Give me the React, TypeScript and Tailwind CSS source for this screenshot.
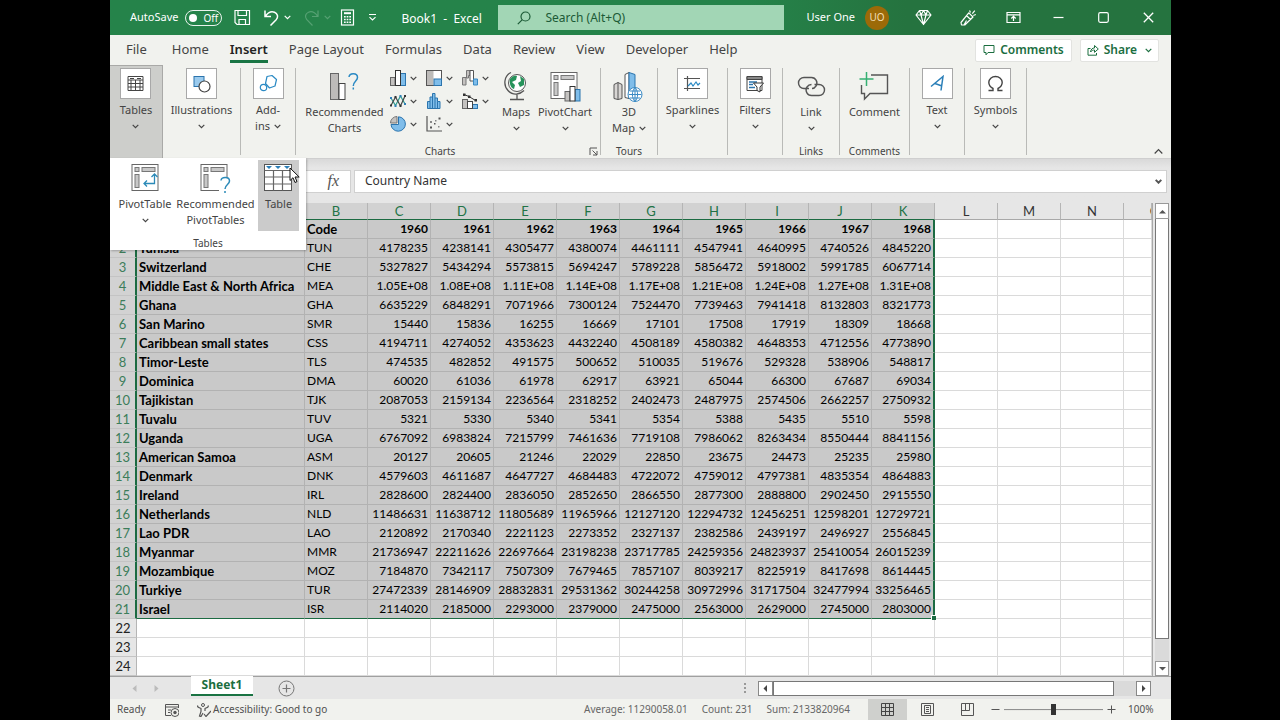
import type { ReactNode } from "react";
import { clsx } from "clsx";

const columns = ["A", "B", "C", "D", "E", "F", "G", "H", "I", "J", "K", "L", "M", "N", "O"];

const selectedCols = 11;
const selectedRows = 21;

const rows: string[][] = [
  ["Country Name", "Code", "1960", "1961", "1962", "1963", "1964", "1965", "1966", "1967", "1968"],
  ["Tunisia", "TUN", "4178235", "4238141", "4305477", "4380074", "4461111", "4547941", "4640995", "4740526", "4845220"],
  ["Switzerland", "CHE", "5327827", "5434294", "5573815", "5694247", "5789228", "5856472", "5918002", "5991785", "6067714"],
  ["Middle East & North Africa", "MEA", "1.05E+08", "1.08E+08", "1.11E+08", "1.14E+08", "1.17E+08", "1.21E+08", "1.24E+08", "1.27E+08", "1.31E+08"],
  ["Ghana", "GHA", "6635229", "6848291", "7071966", "7300124", "7524470", "7739463", "7941418", "8132803", "8321773"],
  ["San Marino", "SMR", "15440", "15836", "16255", "16669", "17101", "17508", "17919", "18309", "18668"],
  ["Caribbean small states", "CSS", "4194711", "4274052", "4353623", "4432240", "4508189", "4580382", "4648353", "4712556", "4773890"],
  ["Timor-Leste", "TLS", "474535", "482852", "491575", "500652", "510035", "519676", "529328", "538906", "548817"],
  ["Dominica", "DMA", "60020", "61036", "61978", "62917", "63921", "65044", "66300", "67687", "69034"],
  ["Tajikistan", "TJK", "2087053", "2159134", "2236564", "2318252", "2402473", "2487975", "2574506", "2662257", "2750932"],
  ["Tuvalu", "TUV", "5321", "5330", "5340", "5341", "5354", "5388", "5435", "5510", "5598"],
  ["Uganda", "UGA", "6767092", "6983824", "7215799", "7461636", "7719108", "7986062", "8263434", "8550444", "8841156"],
  ["American Samoa", "ASM", "20127", "20605", "21246", "22029", "22850", "23675", "24473", "25235", "25980"],
  ["Denmark", "DNK", "4579603", "4611687", "4647727", "4684483", "4722072", "4759012", "4797381", "4835354", "4864883"],
  ["Ireland", "IRL", "2828600", "2824400", "2836050", "2852650", "2866550", "2877300", "2888800", "2902450", "2915550"],
  ["Netherlands", "NLD", "11486631", "11638712", "11805689", "11965966", "12127120", "12294732", "12456251", "12598201", "12729721"],
  ["Lao PDR", "LAO", "2120892", "2170340", "2221123", "2273352", "2327137", "2382586", "2439197", "2496927", "2556845"],
  ["Myanmar", "MMR", "21736947", "22211626", "22697664", "23198238", "23717785", "24259356", "24823937", "25410054", "26015239"],
  ["Mozambique", "MOZ", "7184870", "7342117", "7507309", "7679465", "7857107", "8039217", "8225919", "8417698", "8614445"],
  ["Turkiye", "TUR", "27472339", "28146909", "28832831", "29531362", "30244258", "30972996", "31717504", "32477994", "33256465"],
  ["Israel", "ISR", "2114020", "2185000", "2293000", "2379000", "2475000", "2563000", "2629000", "2745000", "2803000"],
  [],
  [],
  [],
];

const menuTabs = ["File", "Home", "Insert", "Page Layout", "Formulas", "Data", "Review", "View", "Developer", "Help"];

function Chevron({ className }: { className?: string }) {
  return (
    <svg className={clsx("h-[5px] w-[7px] shrink-0", className)} viewBox="0 0 7 5" fill="none" stroke="currentColor" strokeWidth="1.2">
      <path d="M0.7 0.9 3.5 3.7 6.3 0.9" />
    </svg>
  );
}

function Icon({ size, children, className }: { size: number; children: ReactNode; className?: string }) {
  return (
    <svg width={size} height={size} viewBox={`0 0 ${size} ${size}`} fill="none" className={clsx("shrink-0", className)} aria-hidden>
      {children}
    </svg>
  );
}

/* ---------- Title bar ---------- */

function TitleButton({ label, children }: { label: string; children: ReactNode }) {
  return (
    <button type="button" aria-label={label} className="flex h-full w-[45px] items-center justify-center">
      {children}
    </button>
  );
}

function TitleBar() {
  return (
    <header className="flex h-[35px] shrink-0 items-center bg-linear-to-r from-[#25834a] from-60% to-[#25733f] to-75% text-[11px] text-white">
      <label className="ml-5 flex items-center gap-[7px]">
        AutoSave
        <input type="checkbox" className="peer sr-only" />
        <span className="flex h-4 w-[37px] items-center gap-[6px] rounded-full border border-white/90 px-[3px] text-[10px] leading-none">
          <span className="size-2 rounded-full bg-white" />
          Off
        </span>
      </label>
      <button type="button" aria-label="Save" className="ml-3">
        <Icon size={17}>
          <path d="M1 1.5h14.5v14H3l-2-2z M4 1.500v5h8.500v-5 M5 15.500v-5h6.500v5" stroke="#fff" strokeWidth="1.2" />
        </Icon>
      </button>
      <button type="button" aria-label="Undo" className="ml-3 flex items-center gap-1">
        <Icon size={17}>
          <path d="M2 1.5v6h6 M2.4 7.2C5 3.5 8.4 2 11.5 3.2c3 1.200 4 4.600 1.900 7.200L7.500 16.500" stroke="#fff" strokeWidth="1.5" />
        </Icon>
        <Chevron />
      </button>
      <button type="button" aria-label="Redo" className="ml-3 flex items-center gap-1 text-[#56a173]">
        <Icon size={17}>
          <path d="M15 1.5v6H9 M14.6 7.2C12 3.5 8.600 2 5.500 3.200c-3 1.200-4 4.600-1.900 7.200L9.500 16.500" stroke="currentColor" strokeWidth="1.2" />
        </Icon>
        <Chevron />
      </button>
      <button type="button" aria-label="Calculator" className="ml-2">
        <Icon size={17}>
          <rect x="2.5" y="1" width="12" height="15" stroke="#fff" strokeWidth="1.2" />
          <path d="M5 4.2h7" stroke="#fff" strokeWidth="2" />
          <path d="M5 7.8h7M5 10.5h7M5 13.2h7" stroke="#fff" strokeWidth="1.5" strokeDasharray="1.7 0.95" />
        </Icon>
      </button>
      <button type="button" aria-label="Customize Quick Access Toolbar" className="ml-3">
        <Icon size={9}>
          <path d="M1 1.5h7 M1.5 4.2 4.5 7l3-2.8" stroke="#fff" strokeWidth="1.1" />
        </Icon>
      </button>
      <h1 className="ml-6 w-[97px] shrink-0 pt-[2px] text-[12px] whitespace-pre">Book1  -  Excel</h1>
      <label className="flex h-[25px] max-w-[430px] min-w-0 flex-1 items-center bg-[#a2d6b5] px-[19px] text-[#1c5a36]">
        <Icon size={14}>
          <circle cx="8.5" cy="5.5" r="4.5" stroke="currentColor" strokeWidth="1.2" />
          <path d="M5.3 8.7 0.8 13.2" stroke="currentColor" strokeWidth="1.2" />
        </Icon>
        <input
          type="search"
          aria-label="Search"
          placeholder="Search (Alt+Q)"
          className="ml-[14px] w-full min-w-0 bg-transparent text-[12px] outline-none placeholder:text-[#1c5a36]"
        />
      </label>
      <button type="button" className="ml-[22px] flex shrink-0 items-center gap-[10px]">
        User One
        <span className="flex size-6 items-center justify-center rounded-full bg-[#9c6a08] text-[10px] text-[#f3dfb4]">UO</span>
      </button>
      <div className="ml-3 flex h-full shrink-0">
        <TitleButton label="Premium">
          <Icon size={17}>
            <path d="M4.5 1.5h8L16 6l-7.5 9.500L1 6z M1 6h15 M4.5 1.5 6 6l2.500 9.500L11 6l1.500-4.500 M8.500 1.500 6 6 M8.500 1.500 11 6" stroke="#fff" strokeWidth="1.2" strokeLinejoin="round" />
          </Icon>
        </TitleButton>
        <TitleButton label="Coming soon">
          <Icon size={17}>
            <path d="M8.8 3.8 13 8 4.800 16H1.500L1 13.500z M6.500 6.500l4 4 M4 16l2.500-4.500 M10.500 3.500 9.500 1.500 M12.300 4.700l2.500-3 M13.300 6.500l2.500-1" stroke="#fff" strokeWidth="1.2" strokeLinejoin="round" />
          </Icon>
        </TitleButton>
        <TitleButton label="Ribbon display options">
          <Icon size={15}>
            <path d="M1 2.5h13v10H1z M1 4.800h13 M7.500 11V6.500 M5.300 8.500l2.200-2.200 2.200 2.200" stroke="#fff" strokeWidth="1.2" />
          </Icon>
        </TitleButton>
        <TitleButton label="Minimize">
          <Icon size={11}>
            <path d="M0.5 5.5h10" stroke="#fff" strokeWidth="1.2" />
          </Icon>
        </TitleButton>
        <TitleButton label="Maximize">
          <Icon size={11}>
            <rect x="0.7" y="0.7" width="9.6" height="9.6" rx="1.5" stroke="#fff" strokeWidth="1.2" />
          </Icon>
        </TitleButton>
        <TitleButton label="Close">
          <Icon size={11}>
            <path d="M0.8 0.8l9.400 9.400M10.200 0.800 0.800 10.200" stroke="#fff" strokeWidth="1.3" />
          </Icon>
        </TitleButton>
      </div>
    </header>
  );
}

/* ---------- Menu tabs ---------- */

function MenuTabs() {
  return (
    <div className="flex h-[30px] shrink-0 items-center bg-[#f1f2ee] pr-3 pl-4">
      <nav className="flex h-full gap-[21px] text-[13px] text-[#444]">
        {menuTabs.map((tab) => (
          <button key={tab} type="button" className="relative flex h-full shrink-0 items-center first:mr-1">
            <span className={clsx(tab === "Insert" && "font-semibold text-[#222]")}>{tab}</span>
            {tab === "Insert" && <span className="absolute inset-x-0 bottom-[2px] h-[3px] bg-[#197544]" />}
          </button>
        ))}
      </nav>
      <button
        type="button"
        className="ml-auto flex h-[23px] items-center gap-[5px] rounded-xs border border-[#e2e3e0] bg-white px-[7px] text-[12px] font-semibold text-[#1b6e3f]"
      >
        <Icon size={12}>
          <path d="M1 1.5h10v7H5L3 10.800V8.500H1z" stroke="currentColor" />
        </Icon>
        Comments
      </button>
      <button
        type="button"
        className="ml-2 flex h-[23px] items-center gap-[5px] rounded-xs border border-[#e2e3e0] bg-white px-[6px] text-[12px] font-semibold text-[#1b6e3f]"
      >
        <Icon size={12}>
          <path d="M3.5 4.5H1v6.700h8.500V9 M3.500 8c.5-3 2-4 4-4V1.500L11.300 5 7.500 8.300V6C6 6 4.800 6.500 3.500 8z" stroke="currentColor" />
        </Icon>
        Share
        <Chevron className="ml-[3px]" />
      </button>
    </div>
  );
}

/* ---------- Ribbon ---------- */

function Group({ width, label, labelClass, last, children }: { width: string; label?: string; labelClass?: string; last?: boolean; children: ReactNode }) {
  return (
    <section className={clsx("relative my-[3px] flex shrink-0 flex-col border-r border-[#b9bab7]", width, last && "mr-auto")}>
      <div className="flex flex-1 justify-center">{children}</div>
      {label && <h2 className={clsx("absolute inset-x-0 -bottom-[3px] text-center text-[10px] leading-[14px] text-[#444]", labelClass)}>{label}</h2>}
    </section>
  );
}

/* Collapsed group: a framed icon, its label and a chevron below */
function BoxButton({ label, tail, children }: { label: string; tail?: string; children: ReactNode }) {
  return (
    <button type="button" className="flex flex-col items-center text-[11px] leading-4">
      <span className="flex size-[31px] items-center justify-center border border-[#a8a8a8] bg-white">{children}</span>
      <span className="mt-[3px]">{label}</span>
      <span className="flex h-4 items-center gap-1">
        {tail}
        <Chevron />
      </span>
    </button>
  );
}

function BigButton({ label, tail, arrow, children }: { label: string; tail?: string; arrow?: boolean; children: ReactNode }) {
  return (
    <button type="button" className="flex flex-col items-center text-[11px] leading-4">
      <span className="flex h-[36px] items-center justify-center">{children}</span>
      <span>{label}</span>
      <span className="flex h-4 items-center gap-1">
        {tail}
        {arrow && <Chevron />}
      </span>
    </button>
  );
}

function PivotFrame() {
  return (
    <>
      <rect x="1" y="1.5" width="26" height="26" fill="#fff" stroke="#666" />
      <rect x="4" y="4.5" width="4" height="4" fill="#c8c8c8" stroke="#777" />
      <rect x="11" y="4.5" width="13" height="4" fill="#c8c8c8" stroke="#777" />
      <rect x="4" y="11.5" width="4" height="13" fill="#c8c8c8" stroke="#777" />
    </>
  );
}

function GlobeLines() {
  return <path d="M15.5 23.5h13M17 20h10M17 27h10M22 16.500c-3.500 4-3.500 10 0 14M22 16.500c3.500 4 3.500 10 0 14M22 16.500v14" stroke="#3a8ac4" />;
}

const chartTypes: { name: string; art: ReactNode }[] = [
  {
    name: "Column chart",
    art: (
      <>
        <rect x="0.5" y="7.5" width="4.5" height="8" fill="#c4c2c0" stroke="#666" />
        <rect x="10.5" y="3.5" width="5" height="12" fill="#7fbdea" stroke="#2b74ad" />
        <rect x="5.5" y="0.5" width="5" height="15" fill="#fff" stroke="#333" />
      </>
    ),
  },
  {
    name: "Hierarchy chart",
    art: (
      <>
        <rect x="0.5" y="0.5" width="15" height="15" fill="#fff" stroke="#555" />
        <rect x="1" y="1" width="6.5" height="14" fill="#bdbbb9" />
        <rect x="8" y="9" width="7.5" height="6.5" fill="#7fbdea" stroke="#2b74ad" />
      </>
    ),
  },
  {
    name: "Waterfall chart",
    art: (
      <>
        <path d="M0.5 15V7.5H4V15z M4.5 8V0.5H8V5.500H6.500V8z" fill="#c4c2c0" stroke="#777" />
        <path d="M8 0.5h3.500V11H8z" fill="#fff" stroke="#555" />
        <path d="M11.5 9v6h4V9z" fill="#7fbdea" stroke="#3a8ac4" />
      </>
    ),
  },
  {
    name: "Line chart",
    art: (
      <>
        <path d="M1 5 5.5 12.500 10.500 3l4.500 8" stroke="#2f9a8f" strokeWidth="1.2" />
        <path d="M1 12.500 5.500 4l5 9L15 3" stroke="#444" strokeWidth="1.2" />
        <path d="M0 11.500h2v2H0zM4.500 3h2v2h-2zM9.500 12h2v2h-2zM14 2h2v2h-2z" fill="#333" />
        <path d="M0 4h2v2H0zM4.500 12h2v2h-2zM9.500 2h2v2h-2zM14 10h2v2h-2z" fill="#2f7fb8" />
      </>
    ),
  },
  {
    name: "Statistic chart",
    art: <path d="M1.5 15.5V8.500H4V4h2.500V0.500H9V5h2.500v3.500H14v7z M4 8.500v7M6.500 4v11.500M9 5v10.500M11.500 8.500v7" fill="#7fbdea" stroke="#2b74ad" />,
  },
  {
    name: "Combo chart",
    art: (
      <>
        <rect x="0.5" y="6.5" width="5" height="9" fill="#c4c2c0" stroke="#666" />
        <rect x="10.5" y="11.5" width="5" height="4" fill="#7fbdea" stroke="#2b74ad" />
        <rect x="5.5" y="8.5" width="5" height="7" fill="#fff" stroke="#444" />
        <path d="M2 1.500 7 3.500l6.500 4" stroke="#333" />
        <path d="M1 0.500h2.500V3H1zM6 2.500h2.500V5H6zM12.500 6h2.500v2.500h-2.500z" fill="#333" />
      </>
    ),
  },
  {
    name: "Pie chart",
    art: (
      <>
        <path d="M8.500 0.800A7.200 7.200 0 1 1 1 8.500h7.500z" fill="#7fbdea" stroke="#2b74ad" />
        <path d="M7 0.500A6.500 6.500 0 0 0 0.500 7H7z" fill="#c4c2c0" stroke="#777" />
      </>
    ),
  },
  {
    name: "Scatter chart",
    art: (
      <>
        <path d="M1 0v15h15" stroke="#555" strokeWidth="1.2" />
        <path d="M4 10.500h2v2H4zM8 7h1.500v1.500H8zM12.500 1.500h2v2h-2z" fill="#555" />
        <path d="M4 5h2v2H4zM9 4h1.500v1.500H9zM12 10h1.500v1.500H12z" fill="#888" />
      </>
    ),
  },
];

const chartGrid = [chartTypes.slice(0, 3), chartTypes.slice(3, 6), chartTypes.slice(6)];

function TablesMenu() {
  return (
    <div className="absolute top-full left-0 z-20 flex h-[92px] w-[196px] justify-end bg-white shadow-[1px_1px_2px_rgba(0,0,0,0.25)]">
      <button type="button" className="flex w-[62px] flex-col items-center pt-[5px] text-[11px] leading-4">
        <Icon size={29}>
          <PivotFrame />
          <path d="M23.5 11.5v9H13 M20.500 14l3-3 3 3 M16 17.500l-3 3 3 3" stroke="#2b8ab8" strokeWidth="1.3" />
        </Icon>
        <span className="mt-1">PivotTable</span>
        <span className="flex h-4 items-center">
          <Chevron />
        </span>
      </button>
      <button type="button" className="flex w-[79px] flex-col items-center pt-[5px] text-[11px] leading-4">
        <Icon size={31} className="-mb-[2px]">
          <PivotFrame />
          <path d="M19 14h11v16H19z" fill="#fff" />
          <path d="M21 17.5c.5-4 8.500-4 8.500.5 0 3.500-4.500 3.500-4.500 8M25 28v2" stroke="#2b8ab8" strokeWidth="1.5" />
        </Icon>
        <span className="mt-1 text-center">
          Recommended
          <br />
          PivotTables
        </span>
      </button>
      <button type="button" className="relative mt-[2px] mr-[7px] ml-[3px] flex h-[71px] w-[41px] flex-col items-center bg-[#cbcbcb] pt-[3px] text-[11px] leading-4">
        <Icon size={29}>
          <rect x="0.5" y="1.5" width="27" height="26" fill="#fff" stroke="#555" />
          <path d="M.5 7.500h27M.5 14h27M.5 21h27M9.500 7.500v20M18.500 7.500v20" stroke="#666" strokeWidth="1.2" />
          <path d="M2 3h6L5 6zM11 3h6l-3 3zM20 3h6l-3 3z" fill="#2b7fb8" />
        </Icon>
        <span className="mt-1">Table</span>
        {/* Mouse pointer */}
        <svg className="absolute top-[7px] left-[31px] h-[17px] w-[11px]" viewBox="0 0 11 17">
          <path d="M1 1v12.500l3-2.800 2 4.800 2-.9-2-4.600h4.200z" fill="#fff" stroke="#111" />
        </svg>
      </button>
      <h2 className="absolute inset-x-0 bottom-0 text-center text-[10px] leading-[14px]">Tables</h2>
    </div>
  );
}

function Ribbon() {
  return (
    <div className="relative flex h-[93px] shrink-0 bg-[#f1f2ee] text-[#444]">
      <section className="relative flex w-[53px] shrink-0 justify-center border-t border-r border-[#a9a9a7] bg-[#cdcecb] pt-[2px]">
        <BoxButton label="Tables">
          <Icon size={17}>
            <path d="M1 1.500h15v14H1z M1 5h15 M1 8.500h15M1 12h15 M8.500 5v10.500M4 5v10.500M13 5v10.500" stroke="#444" />
            <path d="M3 3.500h4M10 3.500h4" stroke="#444" />
          </Icon>
        </BoxButton>
      </section>
      <TablesMenu />
      <Group width="w-[78px]">
        <BoxButton label="Illustrations">
          <Icon size={18}>
            <rect x="1" y="1.5" width="10" height="10" fill="#9bcbee" stroke="#2b74ad" />
            <circle cx="11.5" cy="11.5" r="5.5" fill="#fff" stroke="#444" strokeWidth="1.2" />
          </Icon>
        </BoxButton>
      </Group>
      <Group width="w-[55px]">
        <BoxButton label="Add-" tail="ins">
          <Icon size={19}>
            <path d="M8 2.500 13 1.500 17.500 5.500 16 12 10.500 14 6.500 9.500z" stroke="#2b8ac4" strokeWidth="1.2" strokeLinejoin="round" />
            <circle cx="4.5" cy="13.5" r="3.2" fill="#fff" stroke="#2b8ac4" strokeWidth="1.2" />
          </Icon>
        </BoxButton>
      </Group>
      <Group width="w-[305px]" label="Charts" labelClass="pr-4">
        <div className="flex w-full">
          <div className="flex w-[94px] justify-center pl-[3px]">
            <BigButton label="Recommended" tail="Charts">
              <Icon size={30}>
                <rect x="1.5" y="2.5" width="8" height="26" fill="#bdbbb9" stroke="#666" />
                <rect x="10" y="12.5" width="6" height="16" fill="#fff" stroke="#444" />
                <path d="M20 6c.5-4.500 8.500-4.500 8.500.5 0 3.500-4.200 3.500-4.200 8.500M24.300 16.500v2" stroke="#2b8ac4" strokeWidth="1.5" />
              </Icon>
            </BigButton>
          </div>
          <div className="flex w-[106px] flex-col gap-[7px] pt-[2px]">
            {chartGrid.map((line, i) => (
              <div key={i} className="flex">
                {line.map((type) => (
                  <button key={type.name} type="button" aria-label={type.name} className="flex w-9 shrink-0 items-center gap-1">
                    <Icon size={16}>{type.art}</Icon>
                    <Chevron />
                  </button>
                ))}
              </div>
            ))}
          </div>
          <div className="flex w-[40px] justify-center">
            <BigButton label="Maps" arrow>
              <Icon size={30}>
                <circle cx="16" cy="12" r="8.5" fill="#fff" stroke="#555" />
                <path d="M9 8c2-3 5-4 7-3l-1 4-4 2 3 3-1 4c-3-1-5-5-4-10z M19 5l4 3v6l-4 2-2-4 3-2z" fill="#26935a" />
                <path d="M10 1.500C3 5 2 14 7 19.500s12 4 16 0 M16 23v5 M9 28.500h14" stroke="#555" strokeWidth="1.3" />
              </Icon>
            </BigButton>
          </div>
          <div className="flex w-[58px] justify-center">
            <BigButton label="PivotChart" arrow>
              <Icon size={31}>
                <PivotFrame />
                <rect x="15" y="20.5" width="5" height="9.5" fill="#c4c2c0" stroke="#666" />
                <rect x="25" y="18.5" width="5" height="11.5" fill="#7fbdea" stroke="#2b74ad" />
                <rect x="20" y="15.5" width="5" height="14.5" fill="#fff" stroke="#333" />
              </Icon>
            </BigButton>
          </div>
          <button type="button" aria-label="Chart settings" className="absolute right-[2px] -bottom-px">
            <Icon size={9}>
              <path d="M1 8V1h7M3.500 3.500 8 8M8 4v4H4" stroke="#555" />
            </Icon>
          </button>
        </div>
      </Group>
      <Group width="w-[57px]" label="Tours">
        <BigButton label="3D" tail="Map" arrow>
          <Icon size={31}>
            <path d="M1 13.500l4-2 4 2v14l-4 1-4-1z M5 11.500v17" fill="#d8d6d4" stroke="#555" />
            <path d="M12 3.500l4-2v26l-4-1z" fill="#fff" stroke="#555" />
            <path d="M16 1.500l6 2v24h-6z" fill="#7fbdea" stroke="#2b74ad" />
            <circle cx="22" cy="23.5" r="7" fill="#fff" stroke="#3a8ac4" />
            <GlobeLines />
          </Icon>
        </BigButton>
      </Group>
      <Group width="w-[70px]">
        <BoxButton label="Sparklines">
          <Icon size={17}>
            <path d="M3.500 1v15M0 3.500h16M0 13.500h16" stroke="#555" strokeWidth="1.2" />
            <path d="M4 11l3-3 2 3 3-4 2 3 2-2" stroke="#2b8ac4" strokeWidth="1.2" />
          </Icon>
        </BoxButton>
      </Group>
      <Group width="w-[55px]">
        <BoxButton label="Filters">
          <Icon size={18}>
            <path d="M1 1.500h15v14H1z" fill="#fff" stroke="#444" />
            <path d="M1 1.500h15v3H1z" fill="#888" stroke="#444" />
            <path d="M3 7h8M3 9.500h4M3 12.500h6" stroke="#2b74ad" strokeWidth="1.5" />
            <path d="M7.500 8h10L14 12v5l-3-1.500V12z" fill="#fff" stroke="#333" />
          </Icon>
        </BoxButton>
      </Group>
      <Group width="w-[57px]" label="Links">
        <BigButton label="Link" arrow>
          <Icon size={29}>
            <path d="M12 16.500H7a5.500 5.500 0 0 1 0-11h7.500a5.500 5.500 0 0 1 4.500 8.500c-1 1.600-2.500 2.500-4 2.500" stroke="#555" strokeWidth="1.4" />
            <path d="M17.500 12.500H22a5.500 5.500 0 0 1 0 11h-7.500a5.500 5.500 0 0 1-4.500-8.500c1-1.600 2.500-2.500 4.500-2.500" stroke="#555" strokeWidth="1.4" />
          </Icon>
        </BigButton>
      </Group>
      <Group width="w-[70px]" label="Comments">
        <BigButton label="Comment">
          <Icon size={31}>
            <path d="M12 4H28.500V22.500H11L5.500 28V22.500H2.500V14" stroke="#555" strokeWidth="1.4" />
            <path d="M7.500 1v14M.5 8h14" stroke="#34b072" strokeWidth="1.5" />
          </Icon>
        </BigButton>
      </Group>
      <Group width="w-[55px]">
        <BoxButton label="Text">
          <Icon size={17}>
            <path d="M2 11.500 14 1.500 12 15.500M6 8.500l7 2.500" stroke="#2b7fb8" strokeWidth="1.5" />
          </Icon>
        </BoxButton>
      </Group>
      <Group width="w-[62px]" last>
        <BoxButton label="Symbols">
          <Icon size={17}>
            <path d="M1.500 15.500h4.500v-2C3 12 1.800 9.500 1.800 7.300 1.800 4 4.800 1.500 8.500 1.500s6.700 2.500 6.700 5.800c0 2.200-1.200 4.700-4.200 6.200v2h4.500" stroke="#444" strokeWidth="1.4" />
          </Icon>
        </BoxButton>
      </Group>
      <button type="button" aria-label="Collapse ribbon" className="absolute right-2 bottom-[2px]">
        <Icon size={9}>
          <path d="M.7 6.500 4.500 2.700 8.300 6.500" stroke="#444" strokeWidth="1.2" />
        </Icon>
      </button>
    </div>
  );
}

/* ---------- Formula bar ---------- */

function FormulaBar() {
  return (
    <div className="flex h-[45px] shrink-0 items-center gap-[3px] border-t border-[#cfcfcf] bg-linear-to-b from-[#d9d9d9] to-[#e6e6e6] to-20% pr-1 pl-[3px]">
      <input type="text" aria-label="Name box" className="h-[23px] w-[100px] border border-[#d0d0d0] bg-white" />
      <div className="flex h-[23px] w-[135px] items-center justify-end border border-[#d0d0d0] bg-white pr-[11px]">
        <button type="button" aria-label="Insert function" className="font-['Liberation_Serif',serif] text-[16px] leading-none text-[#555] italic">
          fx
        </button>
      </div>
      <div className="flex h-[23px] min-w-0 flex-1 items-center border border-[#d0d0d0] bg-white pr-1 pl-[10px]">
        <input
          type="text"
          aria-label="Formula"
          defaultValue="Country Name"
          className="min-w-0 flex-1 bg-transparent text-[12px] text-[#333] outline-none"
        />
        <Chevron className="stroke-2 text-[#555]" />
      </div>
    </div>
  );
}

/* ---------- Sheet ---------- */

function Cell({ row, col, value }: { row: number; col: number; value?: string }) {
  const selected = row < selectedRows && col < selectedCols;
  const lastRow = row === selectedRows - 1 && col < selectedCols;
  const lastCol = col === selectedCols - 1 && row < selectedRows;
  const corner = lastRow && lastCol;
  const heading = col === 0 || (row === 0 && col === 1);

  return (
    <td
      className={clsx(
        "h-[19px] border-r border-b px-[2px] py-0 whitespace-nowrap",
        selected ? "bg-[#c9c9c9]" : "bg-white",
        lastRow ? "border-b-[#1c6b42]" : selected ? "border-b-[#b2b2b2]" : "border-b-[#dadada]",
        lastCol ? "border-r-2 border-r-[#1c6b42]" : selected ? "border-r-[#b2b2b2]" : "border-r-[#dadada]",
        col > 1 && "text-right",
        (row === 0 || col === 0) && "font-bold",
        heading && "text-[13px]",
        corner && "relative",
      )}
    >
      {value}
      {corner && <span className="absolute -right-[3px] -bottom-[2px] size-[5px] border-t border-l border-white bg-[#1c6b42]" />}
    </td>
  );
}

function Sheet() {
  return (
    <div className="flex min-h-0 flex-1 bg-[#e6e6e6]">
      <div className="min-w-0 flex-1 overflow-hidden">
        <table className="w-full table-fixed border-separate border-spacing-0 font-[Lato,sans-serif] text-[12px] leading-[18px] text-black">
          <colgroup>
            <col className="w-[27px]" />
            <col className="w-[168px]" />
            {columns.slice(1, -1).map((name) => (
              <col key={name} className="w-[63px]" />
            ))}
            <col />
          </colgroup>
          <thead>
            <tr>
              <th className="h-[17px] border-r border-b border-[#b5b5b5] bg-[#e6e6e6] p-0" />
              {columns.map((name, i) => (
                <th
                  key={name}
                  scope="col"
                  className={clsx(
                    "h-[17px] overflow-hidden border-r border-b p-0 text-[13px] leading-4 font-normal",
                    i < selectedCols
                      ? "border-r-[#b5b5b5] border-b-[#1c6b42] bg-[#d2d2d2] text-[#217346]"
                      : "border-r-[#b5b5b5] border-b-[#a8a8a8] bg-[#e6e6e6] text-[#333]",
                  )}
                >
                  <span className="block w-[62px] min-w-full">{name}</span>
                </th>
              ))}
            </tr>
          </thead>
          <tbody>
            {rows.map((data, r) => (
              <tr key={r}>
                <th
                  scope="row"
                  className={clsx(
                    "h-[19px] border-r border-b border-b-[#c4c4c4] p-0 text-center text-[13px] font-normal",
                    r < selectedRows ? "border-r-2 border-r-[#1c6b42] bg-[#d2d2d2] text-[#3c7d5a]" : "border-r-[#b5b5b5] bg-[#e6e6e6] text-[#222]",
                  )}
                >
                  {r + 1}
                </th>
                {columns.map((name, c) => (
                  <Cell key={name} row={r} col={c} value={data[c]} />
                ))}
              </tr>
            ))}
          </tbody>
        </table>
      </div>
      <div className="flex w-[19px] shrink-0 flex-col border-l border-[#a8a8a8] px-[2px]">
        <button type="button" aria-label="Scroll up" className="flex h-4 items-center justify-center border border-[#999] bg-white">
          <Icon size={7}>
            <path d="M0 5.500 3.500 2 7 5.500z" fill="#555" />
          </Icon>
        </button>
        <div className="min-h-0 flex-1 bg-[#dadada]">
          <div className="h-[95%] border border-t-0 border-[#777] bg-white" />
        </div>
        <button type="button" aria-label="Scroll down" className="flex h-[15px] items-center justify-center border border-[#999] bg-white">
          <Icon size={7}>
            <path d="M0 2 3.500 5.500 7 2z" fill="#555" />
          </Icon>
        </button>
      </div>
    </div>
  );
}

function SheetTabs() {
  return (
    <div className="flex h-[23px] shrink-0 items-center border-t border-[#a0a0a0] bg-[#e6e6e6]">
      <div className="flex w-[81px] shrink-0 items-center gap-[15px] pl-[21px]">
        <button type="button" aria-label="Previous sheet">
          <Icon size={7}>
            <path d="M5.500 0v7L1.500 3.500z" fill="#bbb" />
          </Icon>
        </button>
        <button type="button" aria-label="Next sheet">
          <Icon size={7}>
            <path d="M1.500 0v7l4-3.500z" fill="#bbb" />
          </Icon>
        </button>
      </div>
      <button
        type="button"
        className="-mt-px h-5 w-[62px] shrink-0 self-start border-b-2 border-[#1a7343] bg-white text-[12px] leading-[18px] font-bold text-[#1b6e3f]"
      >
        Sheet1
      </button>
      <button type="button" aria-label="New sheet" className="ml-[25px]">
        <Icon size={17}>
          <circle cx="8.5" cy="8.5" r="7.5" stroke="#777" />
          <path d="M8.500 4.500v8M4.500 8.500h8" stroke="#777" strokeWidth="1.2" />
        </Icon>
      </button>
      <span className="ml-auto flex w-[14px] shrink-0 flex-col gap-[2px]">
        <span className="size-[2px] bg-[#999]" />
        <span className="size-[2px] bg-[#999]" />
        <span className="size-[2px] bg-[#999]" />
      </span>
      <div className="mr-5 flex h-[15px] w-[37%] bg-[#dadada]">
        <button type="button" aria-label="Scroll left" className="flex w-[15px] shrink-0 items-center justify-center border border-[#888] bg-white">
          <Icon size={7}>
            <path d="M5 0v7L1.500 3.500z" fill="#444" />
          </Icon>
        </button>
        <div className="min-w-0 flex-1">
          <div className="h-full w-[94%] border border-[#777] bg-white" />
        </div>
        <button type="button" aria-label="Scroll right" className="flex w-[15px] shrink-0 items-center justify-center border border-[#888] bg-white">
          <Icon size={7}>
            <path d="M2 0v7l3.500-3.500z" fill="#444" />
          </Icon>
        </button>
      </div>
    </div>
  );
}

function StatusBar() {
  return (
    <footer className="flex h-[21px] shrink-0 items-center bg-[#f1f2ee] text-[10px] text-[#505050]">
      <span className="w-[47px] shrink-0 pl-[7px]">Ready</span>
      <button type="button" aria-label="Record macro" className="ml-2">
        <Icon size={14}>
          <path d="M6 12.500H.5V1.500h13V5M.5 4h13M3 7h3M3 9.500h2" stroke="#555" />
          <circle cx="10" cy="9.5" r="4" stroke="#555" />
          <circle cx="10" cy="9.5" r="1.7" fill="#555" />
        </Icon>
      </button>
      <button type="button" className="ml-[18px] flex items-center gap-[2px]">
        <Icon size={14}>
          <circle cx="6" cy="2" r="1.5" stroke="#555" />
          <path d="M.8 2.500C0 4 2 4.500 4 5.500v3L2.500 13l1.500.5L6 10M11 2.500c1 1.500-1 2-3 3v2.500M7 11l2 2.500L14 8" stroke="#555" strokeWidth="1.2" />
        </Icon>
        Accessibility: Good to go
      </button>
      <div className="ml-auto flex shrink-0 gap-[14px] text-[#666]">
        <span>Average: 11290058.01</span>
        <span>Count: 231</span>
        <span>Sum: 2133820964</span>
      </div>
      <div className="ml-[18px] flex h-full shrink-0">
        <button type="button" aria-label="Normal view" className="flex w-[39px] items-center justify-center bg-[#cfd0cd]">
          <Icon size={13}>
            <path d="M.5.5h12v12H.5zM.5 4.500h12M.5 8.500h12M4.500.5v12M8.500.5v12" stroke="#444" />
          </Icon>
        </button>
        <button type="button" aria-label="Page layout view" className="flex w-[41px] items-center justify-center">
          <Icon size={13}>
            <path d="M.5.5h12v12H.5zM3.500 2.500h6v8h-6zM5 4.500h3M5 6.500h3M5 8.500h3" stroke="#555" />
          </Icon>
        </button>
        <button type="button" aria-label="Page break preview" className="flex w-[39px] items-center justify-center">
          <Icon size={13}>
            <path d="M.5.5h12v12H.5zM.5 7.500h8V.5M4.500.5v7" stroke="#555" />
          </Icon>
        </button>
      </div>
      <button type="button" aria-label="Zoom out" className="ml-1">
        <Icon size={9}>
          <path d="M.5 4.500h8" stroke="#555" />
        </Icon>
      </button>
      <input
        type="range"
        aria-label="Zoom"
        defaultValue={50}
        className="mx-1 h-3 w-[99px] appearance-none bg-linear-to-b from-transparent from-45% via-[#888] via-45% to-transparent to-55% [&::-webkit-slider-thumb]:h-[11px] [&::-webkit-slider-thumb]:w-[5px] [&::-webkit-slider-thumb]:appearance-none [&::-webkit-slider-thumb]:bg-[#333]"
      />
      <button type="button" aria-label="Zoom in">
        <Icon size={9}>
          <path d="M.5 4.500h8M4.500.5v8" stroke="#555" />
        </Icon>
      </button>
      <span className="w-[55px] shrink-0 pl-3">100%</span>
    </footer>
  );
}

export default function App() {
  return (
    <div className="h-screen overflow-hidden bg-black pr-[109px] pl-[110px]">
      <main className="flex h-full min-w-0 flex-col overflow-hidden font-['Noto_Sans','Open_Sans',sans-serif]">
        <TitleBar />
        <MenuTabs />
        <Ribbon />
        <FormulaBar />
        <Sheet />
        <SheetTabs />
        <StatusBar />
      </main>
    </div>
  );
}
